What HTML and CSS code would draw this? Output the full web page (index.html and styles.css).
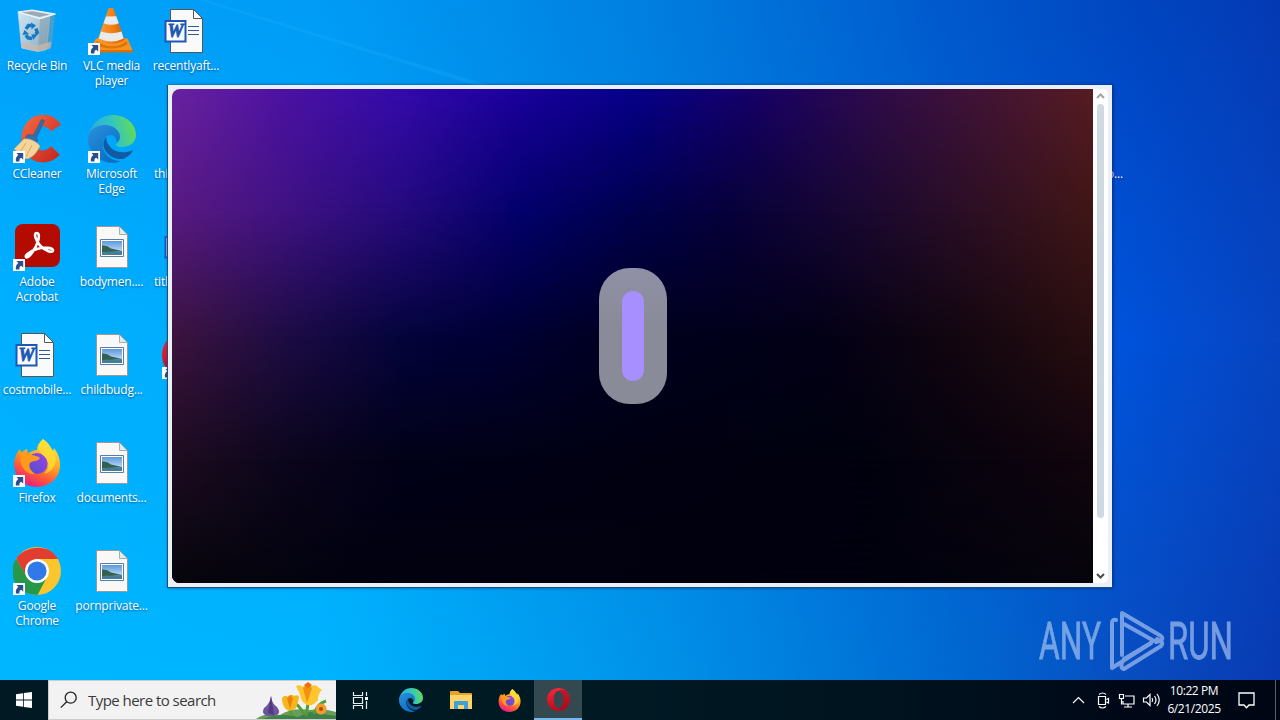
FILE: index.html
```html
<!DOCTYPE html>
<html lang="en">
<head>
<meta charset="utf-8">
<title>Desktop</title>
<link rel="stylesheet" href="styles.css">
</head>
<body>
<svg class="defs" width="0" height="0" aria-hidden="true">
  <defs>
    <linearGradient id="gBin" x1="0" y1="0" x2="1" y2="1"><stop offset="0" stop-color="#dcecf6"/><stop offset="1" stop-color="#8fa9bb"/></linearGradient>
    <linearGradient id="gCone" x1="0" y1="0" x2="1" y2="0"><stop offset="0" stop-color="#f9a03a"/><stop offset=".5" stop-color="#f58218"/><stop offset="1" stop-color="#d85f00"/></linearGradient>
    <linearGradient id="gE1" x1="0" y1=".5" x2="1" y2=".3"><stop offset="0" stop-color="#2aa8dc"/><stop offset=".5" stop-color="#30c5c4"/><stop offset="1" stop-color="#68dc50"/></linearGradient>
    <linearGradient id="gE2" x1="0" y1="0" x2=".7" y2="1"><stop offset="0" stop-color="#2a8fdb"/><stop offset="1" stop-color="#0a6fc4"/></linearGradient>
    <linearGradient id="gFox" x1=".8" y1="0" x2=".3" y2="1"><stop offset="0" stop-color="#fff04a"/><stop offset=".4" stop-color="#ffac24"/><stop offset=".72" stop-color="#ff5a36"/><stop offset="1" stop-color="#e8178a"/></linearGradient>
    <linearGradient id="gGlobe" x1="1" y1="0" x2="0" y2="1"><stop offset="0" stop-color="#9b42ee"/><stop offset="1" stop-color="#4d50c8"/></linearGradient>
    <linearGradient id="gCc" x1="0" y1="0" x2="1" y2="1"><stop offset="0" stop-color="#f0623c"/><stop offset="1" stop-color="#c92b22"/></linearGradient>
    <linearGradient id="gSky" x1="0" y1="0" x2="0" y2="1"><stop offset="0" stop-color="#5c98de"/><stop offset="1" stop-color="#dff0fa"/></linearGradient>
    <linearGradient id="gOp" x1="0" y1="0" x2="0" y2="1"><stop offset="0" stop-color="#ff2638"/><stop offset="1" stop-color="#b90a1c"/></linearGradient>
  </defs>
  <symbol id="arrow" viewBox="0 0 12 12"><path fill="#fff" d="M0 0h12v12H0z"/><path fill="#2a4f8c" d="M3.500 2h6.700v6.700L8.300 6.800C6.800 7.400 6.200 8.600 6.500 10.500H3C2.300 7.600 3.400 5.600 5.300 4z"/></symbol>
  <symbol id="bin" viewBox="0 0 48 48"><path fill="url(#gBin)" stroke="#c3d6e2" stroke-width=".8" d="M5 5 37 8 33.500 42.500 25 44.500 8.700 41z" opacity=".95"/><path fill="#7f9aac" opacity=".55" d="M27 12 42 7.500 38.500 40.500 25 44.500z"/><path fill="#d8e2e8" stroke="#eef6fb" stroke-width="1.200" d="M5 5 19 3 42.500 7 27 11.500z"/><path fill="#9aa9b3" d="m9 5.600 10-1.300 18 3.100-10.500 2.700z"/><path fill="#d0b9a8" opacity=".7" d="m9 36 15 2.500 14.500-4-1 7L25 44.500 9 41z"/><g fill="none" stroke="#1479c4" stroke-width="3.400"><path d="m13 22 2.500-3.500h3M23 21.500l1.300 4-1.800 1.500M19 31.500l-4-.5-2-3"/></g><path fill="#1479c4" d="m18 15.500 5 3-4.500 4zM25 27l-5 6-1.500-5.500zM9.500 28l2-5 4.500 4z"/></symbol>
  <symbol id="vlc" viewBox="0 0 48 48"><path fill="#f79420" d="M8 31.500h31.500L45 44.500H1z"/><path fill="#e06c00" d="M1 43h44v2.500H1z"/><path fill="#d76700" opacity=".7" d="M9 34c8 7 22 7 29.500 0l1 3C33 43 14 43 8 37z"/><path fill="url(#gCone)" d="M20.500 1.500q3-1.500 5 0L36.500 33q-14 8-27 0z"/><path fill="#e8eaec" d="m18 9.500 10.200-.2 2.600 7q-7.500 3-15.300 0zM13 24.500q10 3.500 20.500 0l2.200 7q-12 6-24.800 0z"/></symbol>
  <symbol id="word" viewBox="0 0 48 48"><path fill="#fafafa" stroke="#555" stroke-width="1" d="M8.500 2.500h23l9 9v34h-32z"/><path fill="#fff" stroke="#555" d="M31.500 2.500v9h9z"/><path stroke="#315b8f" stroke-width="1" d="M26 19.500h11M26 23.500h11M26 27.500h11"/><path fill="#f7faff" stroke="#1e57b3" stroke-width="2" d="M3.500 14h20v20.500h-20z"/><text x="13.500" y="30" text-anchor="middle" font-family="Liberation Serif, serif" font-style="italic" font-weight="bold" font-size="18" fill="#1e57b3" stroke="#1e57b3" stroke-width=".8">W</text></symbol>
  <symbol id="pic" viewBox="0 0 48 48"><path fill="#f8f8f7" stroke="#999" stroke-width="1" d="M8.500 3.500h23l8 8v33h-31z"/><path fill="#d9edf8" stroke="#999" stroke-width=".8" d="M31.500 3.500v8h8z"/><path fill="#fff" stroke="#587da3" d="M12.500 16.500h23v17h-23z"/><path fill="url(#gSky)" d="M14 18h20v14H14z"/><path fill="#32624d" d="M14 22.500q5-.5 9 3l11 2.500-20 2z"/><path fill="#467d9b" d="M14 29 34 28v4H14z"/></symbol>
  <symbol id="cc" viewBox="0 0 48 48"><path fill="none" stroke="url(#gCc)" stroke-width="12" d="M43 13C34-1 14 6 14.500 24S32 46.500 42.500 35.500"/><path fill="#2e6fae" stroke="#205582" stroke-width=".5" d="m28.500 4.500 3 1.200-8 17 1.500 3-4 3-9-5 2.500-4 6 .5z"/><path fill="#f5d49a" stroke="#cda468" stroke-width=".6" d="M11 24c5-1 12 2 16 7-3 6-7 12-14 13L1 34q5-5 10-10z"/><path stroke="#d5aa68" d="M13 28 7 37M19 30l-6 12"/></symbol>
  <symbol id="edge" viewBox="0 0 48 48"><path fill="url(#gE1)" d="M0 24C2 9 12 0 25 0c13 0 23 9 23 20 0 7-6 12-14 12-6 0-7-2-5-4 5-6-1-14-11-14C9 14 2 19 0 24z"/><path fill="url(#gE2)" d="M0 24c0-9 8-14 17-14 8 0 15 5 15 12 0 2-1 4-3 6 0-5-3-8-7-8-8 0-12 16 2 24 4 2 7 2 9 2C21 52 0 43 0 24z"/><path fill="#125aa1" d="M18 22c-7 8 1 23 17 22 5-2 9-6 10-9-13 6-26 0-27-13z"/></symbol>
  <symbol id="acro" viewBox="0 0 48 48"><rect x="2" y="1" width="45" height="43" rx="8" fill="#b30b00"/><path fill="none" stroke="#fff" stroke-width="2.600" stroke-linejoin="round" d="M23.500 10c-3 0-1 8 4 13 5 5 12 7.500 12.500 4.500.4-3-9-3.500-16-1.500-6 2-12.500 6-11 8 2.500 2.500 10-9 12-16 1.500-5 1-8-1.500-8z"/></symbol>
  <symbol id="firefox" viewBox="0 0 48 48"><path fill="url(#gFox)" d="M30 0c7 5 8 9 10 12l1-3c8 10 8 23 1 31-10 11-28 10-36 0C-1 31 0 17 7 10l1 4c2-2 4-3 6-4l1 5c3-3 6-4 9-4 0-5 3-8 6-11z"/><circle cx="24" cy="24.500" r="10.500" fill="url(#gGlobe)"/><path fill="#ffe036" d="M30 0c-7 7-5 13 2 18 5 5 4 13-1 17 11-3 15-14 9-23-2-2-8-6-10-12z" opacity=".75"/><path fill="#ff9a1c" d="M7 13c5-1 9 1 12 3 3 1 6 1 8 3-2 4-7 2-10 5-2 4 1 8 5 11C13 36 6 28 7 13z"/></symbol>
  <symbol id="chrome" viewBox="0 0 48 48"><circle cx="24" cy="24" r="24" fill="#fbc52d"/><path fill="#e23d30" d="M3.200 12C10-1 37-5 44.800 12H24L12 27z"/><path fill="#279849" d="M3.200 12 14 30l10 6 9-4-8.500 16C1 48-6 24 3.200 12z"/><circle cx="24" cy="24" r="12" fill="#fff"/><circle cx="24" cy="24" r="9.600" fill="#3178e8"/></symbol>
  <symbol id="opera" viewBox="0 0 48 48"><path fill="url(#gOp)" fill-rule="evenodd" d="M24 0a24 24 0 1 0 .1 0zM24 6c6 0 10 8 10 18s-4 18-10 18-10-8-10-18S18 6 24 6z"/><path fill="#8f1020" opacity=".55" d="M24 6c4-4 11-2 15-1 12 10 12 28 0 38-6 4-12 2-15-1 6 0 10-8 10-18S30 6 24 6z"/></symbol>
</svg>

<div class="desktop">
  <div class="wall wall-mid"></div>
  <div class="wall wall-low"></div>
  <svg class="beams" width="1280" height="680"><path fill="#25b4ff" opacity=".22" d="M198 0h8l282 85h-14z"/></svg>

  <div class="icons">
    <div class="item"><svg class="ico"><use href="#bin"/></svg><span class="label">Recycle Bin</span></div>
    <div class="item"><svg class="ico"><use href="#cc"/></svg><svg class="tag"><use href="#arrow"/></svg><span class="label">CCleaner</span></div>
    <div class="item"><svg class="ico"><use href="#acro"/></svg><svg class="tag"><use href="#arrow"/></svg><span class="label">Adobe<br>Acrobat</span></div>
    <div class="item"><svg class="ico"><use href="#word"/></svg><span class="label">costmobile...</span></div>
    <div class="item"><svg class="ico"><use href="#firefox"/></svg><svg class="tag"><use href="#arrow"/></svg><span class="label">Firefox</span></div>
    <div class="item"><svg class="ico"><use href="#chrome"/></svg><svg class="tag"><use href="#arrow"/></svg><span class="label">Google<br>Chrome</span></div>
    <div class="item"><svg class="ico"><use href="#vlc"/></svg><svg class="tag"><use href="#arrow"/></svg><span class="label">VLC media<br>player</span></div>
    <div class="item"><svg class="ico"><use href="#edge"/></svg><svg class="tag"><use href="#arrow"/></svg><span class="label">Microsoft<br>Edge</span></div>
    <div class="item"><svg class="ico"><use href="#pic"/></svg><span class="label">bodymen....</span></div>
    <div class="item"><svg class="ico"><use href="#pic"/></svg><span class="label">childbudg...</span></div>
    <div class="item"><svg class="ico"><use href="#pic"/></svg><span class="label">documents...</span></div>
    <div class="item"><svg class="ico"><use href="#pic"/></svg><span class="label">pornprivate...</span></div>
    <div class="item"><svg class="ico"><use href="#word"/></svg><span class="label">recentlyaft...</span></div>
    <div class="item cut"><svg class="ico"></svg><span class="label">thi</span></div>
    <div class="item cut"><svg class="ico"><use href="#word"/></svg><span class="label">titl</span></div>
    <div class="item"><svg class="ico"><use href="#opera"/></svg><svg class="tag"><use href="#arrow"/></svg></div>
  </div>
  <span class="label stray">o...</span>

  <div class="window">
    <div class="view">
      <div class="glow g1"></div><div class="glow g2"></div><div class="glow g3"></div><div class="glow g4"></div>
      <div class="pill"><div class="bar"></div></div>
    </div>
    <div class="scroll">
      <svg width="9" height="6" viewBox="0 0 9 6"><path fill="none" stroke="#a3a3a3" stroke-width="2" d="M1 5l3.500-3.500L8 5"/></svg>
      <div class="thumb"></div>
      <svg width="9" height="6" viewBox="0 0 9 6"><path fill="none" stroke="#484848" stroke-width="2" d="M1 1l3.500 3.500L8 1"/></svg>
    </div>
  </div>

  <svg class="brand" width="200" height="64" viewBox="0 0 200 64">
    <g font-family="Roboto, sans-serif" font-size="52" fill="#a9c6f2" stroke="#a9c6f2" stroke-width=".8">
      <text x="3" y="50" textLength="62" lengthAdjust="spacingAndGlyphs">ANY</text>
      <text x="132" y="50" textLength="65" lengthAdjust="spacingAndGlyphs">RUN</text>
    </g>
    <g fill="none" stroke="#a9c6f2" stroke-width="4" stroke-linejoin="round" stroke-linecap="round">
      <path d="M86 46V4l39 23q3 3-1 5l-4 1L88 15"/>
      <path d="M80 11q-4-1-4 3v45l39-25"/>
      <path d="M86 54q-2 5 2 6l37-23q3-3-1-5l-3-2M88 50l27-16"/>
    </g>
  </svg>
</div>

<div class="taskbar">
  <div class="start"><svg width="16" height="16" viewBox="0 0 16 16"><path fill="#fff" d="M0 2.200 7 1.200v6.400H0zM7.800 1.100 16 0v7.600H7.800zM0 8.400h7v6.400l-7-1zM7.800 8.400H16V16l-8.200-1.100z"/></svg></div>
  <div class="search">
    <svg class="lens" width="18" height="18" viewBox="0 0 18 18"><circle cx="10.700" cy="6.700" r="5.500" fill="none" stroke="#222" stroke-width="1.300"/><path stroke="#222" stroke-width="1.300" d="M6.700 10.700.8 16.600"/></svg>
    <span class="hint">Type here to search</span>
    <svg class="flowers" width="82" height="39" viewBox="0 0 82 39">
      <path fill="#6a9c5b" d="M2 39q10-7 24-4 12-8 30-5 14-2 26 2v7z"/>
      <path fill="#3f8048" d="M8 39q20-7 36-2l12-5 26 4v3z"/>
      <path fill="none" stroke="#4f9e3d" stroke-width="3" d="M35 27l3 9M54 24l-2 12M60 34q4-11 12-13M50 34q-6-10-10-11"/>
      <path fill="#6e54a0" d="M17 16q1 8 6 11 6 8-5 9-12 0-8-8 6-4 7-12z"/><path fill="#4f397f" d="M17 16l3 19-6-2z"/>
      <path fill="#f8b51d" d="M28 18q3-4 6-1 3-4 6-1 4-2 5 1-1 8-4 12-7 4-10-1-3-4-3-10z"/><path fill="#e98408" d="m33 18 3 11 3-11-3-3z"/>
      <path fill="#ffc52c" d="M42 6q4-2 7 1 4-6 8-1 5-2 7 1l4 3q-4 3-4 10-8 10-16 1-2-8-6-15z"/><path fill="#f29112" d="m49 8 4 15 5-15-4-4z"/><path fill="#e97012" d="m50 5 4-3 4 3-4 3z"/>
      <circle cx="67" cy="29" r="5.500" fill="#f49b28"/><circle cx="67" cy="29" r="2" fill="#a94c12"/>
    </svg>
  </div>
  <div class="app"><svg width="18" height="17" viewBox="0 0 18 17"><path fill="none" stroke="#e8eef0" stroke-width="1.200" d="M1.500 0v3.500h9V0M1.500 17v-3.500h9V17M1.500 5.500h9v6h-9zM14.500 0v4M14.500 9v8"/><path fill="#fff" d="M13 5h3v3h-3z"/></svg></div>
  <div class="app wide"><svg class="tico"><use href="#edge"/></svg></div>
  <div class="app"><svg width="22" height="19" viewBox="0 0 22 19"><path fill="#e5a52b" d="M0 1q0-1 1-1h7l2 2h11q1 0 1 1v4H0z"/><path fill="#ffd568" d="M0 4h22v14H0z"/><path fill="#3e9fdb" d="M4 11q0-1 1-1h12q1 0 1 1v7h-4v-4H8v4H4z"/></svg></div>
  <div class="app"><svg class="tico ff"><use href="#firefox"/></svg></div>
  <div class="app active"><svg class="tico ff"><use href="#opera"/></svg></div>
  <div class="tray">
    <svg width="92" height="20" viewBox="0 0 92 20" fill="none" stroke="#fff" stroke-width="1.200"><path d="M1 13l5.500-5.500L12 13"/><path d="M26.500 6.500h7v8h-7zM34.500 9.500l2-1v4.500l-2-1M27 4.500q3.500-3 7 0M27 16.500q3.500 3 7 0"/><path d="M53 6h9v8H51v-3M47.500 4.500h4v4h-4zM49.500 8.500v6M52 17h8M56 14v3"/><path d="M71.500 8h3l3.500-3.500v11L74.500 12h-3zM80 8q1.500 2 0 4M82.500 6q3 4 0 8M85 4q4.500 6 0 12"/></svg>
    <div class="clock"><span>10:22 PM</span><span>6/21/2025</span></div>
    <svg class="note" width="17" height="17" viewBox="0 0 17 17"><path fill="none" stroke="#fff" stroke-width="1.300" d="M1 1h15v12h-5l-2.500 2.800L6 13H1z"/></svg>
    <div class="peek"></div>
  </div>
</div>
</body>
</html>
```
FILE: styles.css
```css
* { box-sizing: border-box; }
body { margin: 0; width: 1280px; height: 720px; overflow: hidden; display: flex; flex-direction: column; font-family: "Open Sans", "Noto Sans", sans-serif; }
.defs { position: absolute; overflow: visible; }

.desktop { position: relative; height: 680px; overflow: hidden; background: linear-gradient(90deg, #00a2fa 0, #009cf6 320px, #0080e0 640px, #0058cc 960px, #0046c0 1130px, #053ab4 1280px); }
.wall { position: absolute; inset: 0; }
.wall-mid { background: linear-gradient(90deg, #00b0ff 0, #00aafc 320px, #0088e6 640px, #0062d4 960px, #0052da 1130px, #0744c0 1280px); mask-image: linear-gradient(transparent 0, #000 50%); }
.wall-low { background: linear-gradient(90deg, #00b6ff 0, #00b4ff 320px, #0094ea 640px, #0068d0 960px, #084dc0 1130px, #083ab2 1280px); mask-image: linear-gradient(transparent 50%, #000 100%); }
.beams { position: absolute; left: 0; top: 0; }

.icons { position: relative; display: grid; grid-auto-flow: column; grid-template-rows: repeat(6, 108px); grid-auto-columns: 74.500px; width: 225px; padding-top: 7px; }
.item { position: relative; display: flex; flex-direction: column; align-items: center; width: 74px; }
.ico { width: 48px; height: 48px; flex: none; }
.tag { position: absolute; left: 13px; top: 36px; width: 12px; height: 12px; }
.label { margin-top: 3px; font-size: 12px; line-height: 15px; letter-spacing: -0.2px; color: #fff; text-align: center; white-space: nowrap; text-shadow: 0 1px 2px rgba(0, 30, 80, .6); }
.cut .label { align-self: flex-start; margin-left: 5px; }
.stray { position: absolute; left: 1107px; top: 163px; }

.window { position: absolute; left: 167px; top: 85px; width: 945px; height: 503px; display: flex; padding: 4px; background: #ebf0f8; border-left: 1px solid #17517d; border-bottom: 1px solid #17517d; box-shadow: 1px 0 3px rgba(0, 20, 80, .6); }
.view { position: relative; width: 921px; height: 494px; flex: none; display: flex; align-items: center; justify-content: center; overflow: hidden; border-radius: 8px 0 0 8px; background: linear-gradient(90deg, #6a22a0 0, #4c12a2 12%, #340aac 25%, #1a009c 38%, #06008a 50%, #160068 63%, #300c48 77%, #561c22 100%); }
.glow { position: absolute; inset: 0; }
.g1 { background: linear-gradient(90deg, #581a80 0, #401282 12%, #240a7c 25%, #02006a 38%, #00004c 50%, #06003a 60%, #1a0830 75%, #401616 100%); mask-image: linear-gradient(transparent 0, #000 25%); }
.g2 { background: linear-gradient(90deg, #3c143e 0, #1e0c44 12%, #04043c 25%, #000034 36%, #00001e 50%, #020016 70%, #120610 85%, #280e10 100%); mask-image: linear-gradient(transparent 25%, #000 50%); }
.g3 { background: linear-gradient(90deg, #1e0c20 0, #0c061c 12%, #010118 25%, #000012 50%, #00010e 75%, #12050e 100%); mask-image: linear-gradient(transparent 50%, #000 75%); }
.g4 { background: linear-gradient(90deg, #07060c 0, #01010f 20%, #00000e 75%, #06050c 100%); mask-image: linear-gradient(transparent 75%, #000 100%); }
.pill { position: relative; display: flex; align-items: center; justify-content: center; width: 68px; height: 136px; border-radius: 31px; background: linear-gradient(#9090a6, #8a8b99 40%); }
.bar { width: 22px; height: 90px; border-radius: 11px; background: #a78fff; }
.scroll { flex: none; display: flex; flex-direction: column; align-items: center; width: 15px; height: 494px; padding: 4px 0; background: #fff; border-radius: 0 5px 5px 0; }
.thumb { width: 7px; height: 414px; margin: 5px 0 auto; border-radius: 4px; background: #cfd9e1; }
.brand { position: absolute; left: 1036px; top: 609px; opacity: .68; }

.taskbar { display: flex; height: 40px; background: linear-gradient(90deg, #001923 0, #001a24 45%, #00131f 70%, #000817 88%, #000614 100%); }
.start { display: flex; align-items: center; justify-content: center; width: 48px; }
.search { position: relative; display: flex; align-items: center; width: 288px; background: #f2f2f2; border: 1px solid #c9cdcf; border-width: 1px 0 1px 1px; }
.lens { margin-left: 11px; }
.hint { margin-left: 10px; font-size: 15px; letter-spacing: -0.54px; color: #3a3a3a; white-space: nowrap; }
.flowers { position: absolute; right: 0; bottom: 0; }
.app { display: flex; align-items: center; justify-content: center; width: 49px; }
.wide { width: 51px; }
.tico { width: 24px; height: 24px; }
.ff { width: 23px; height: 23px; }
.active { width: 48px; background: #344850; border-bottom: 2px solid #76b9ed; }
.tray { display: flex; align-items: center; margin-left: auto; }
.clock { display: flex; flex-direction: column; align-items: center; width: 62px; margin-left: -1px; font-size: 12px; line-height: 18px; letter-spacing: -0.4px; color: #fff; white-space: nowrap; }
.note { margin-left: 13px; }
.peek { width: 1px; height: 40px; margin: 0 4px 0 20px; background: #53606b; }
```
